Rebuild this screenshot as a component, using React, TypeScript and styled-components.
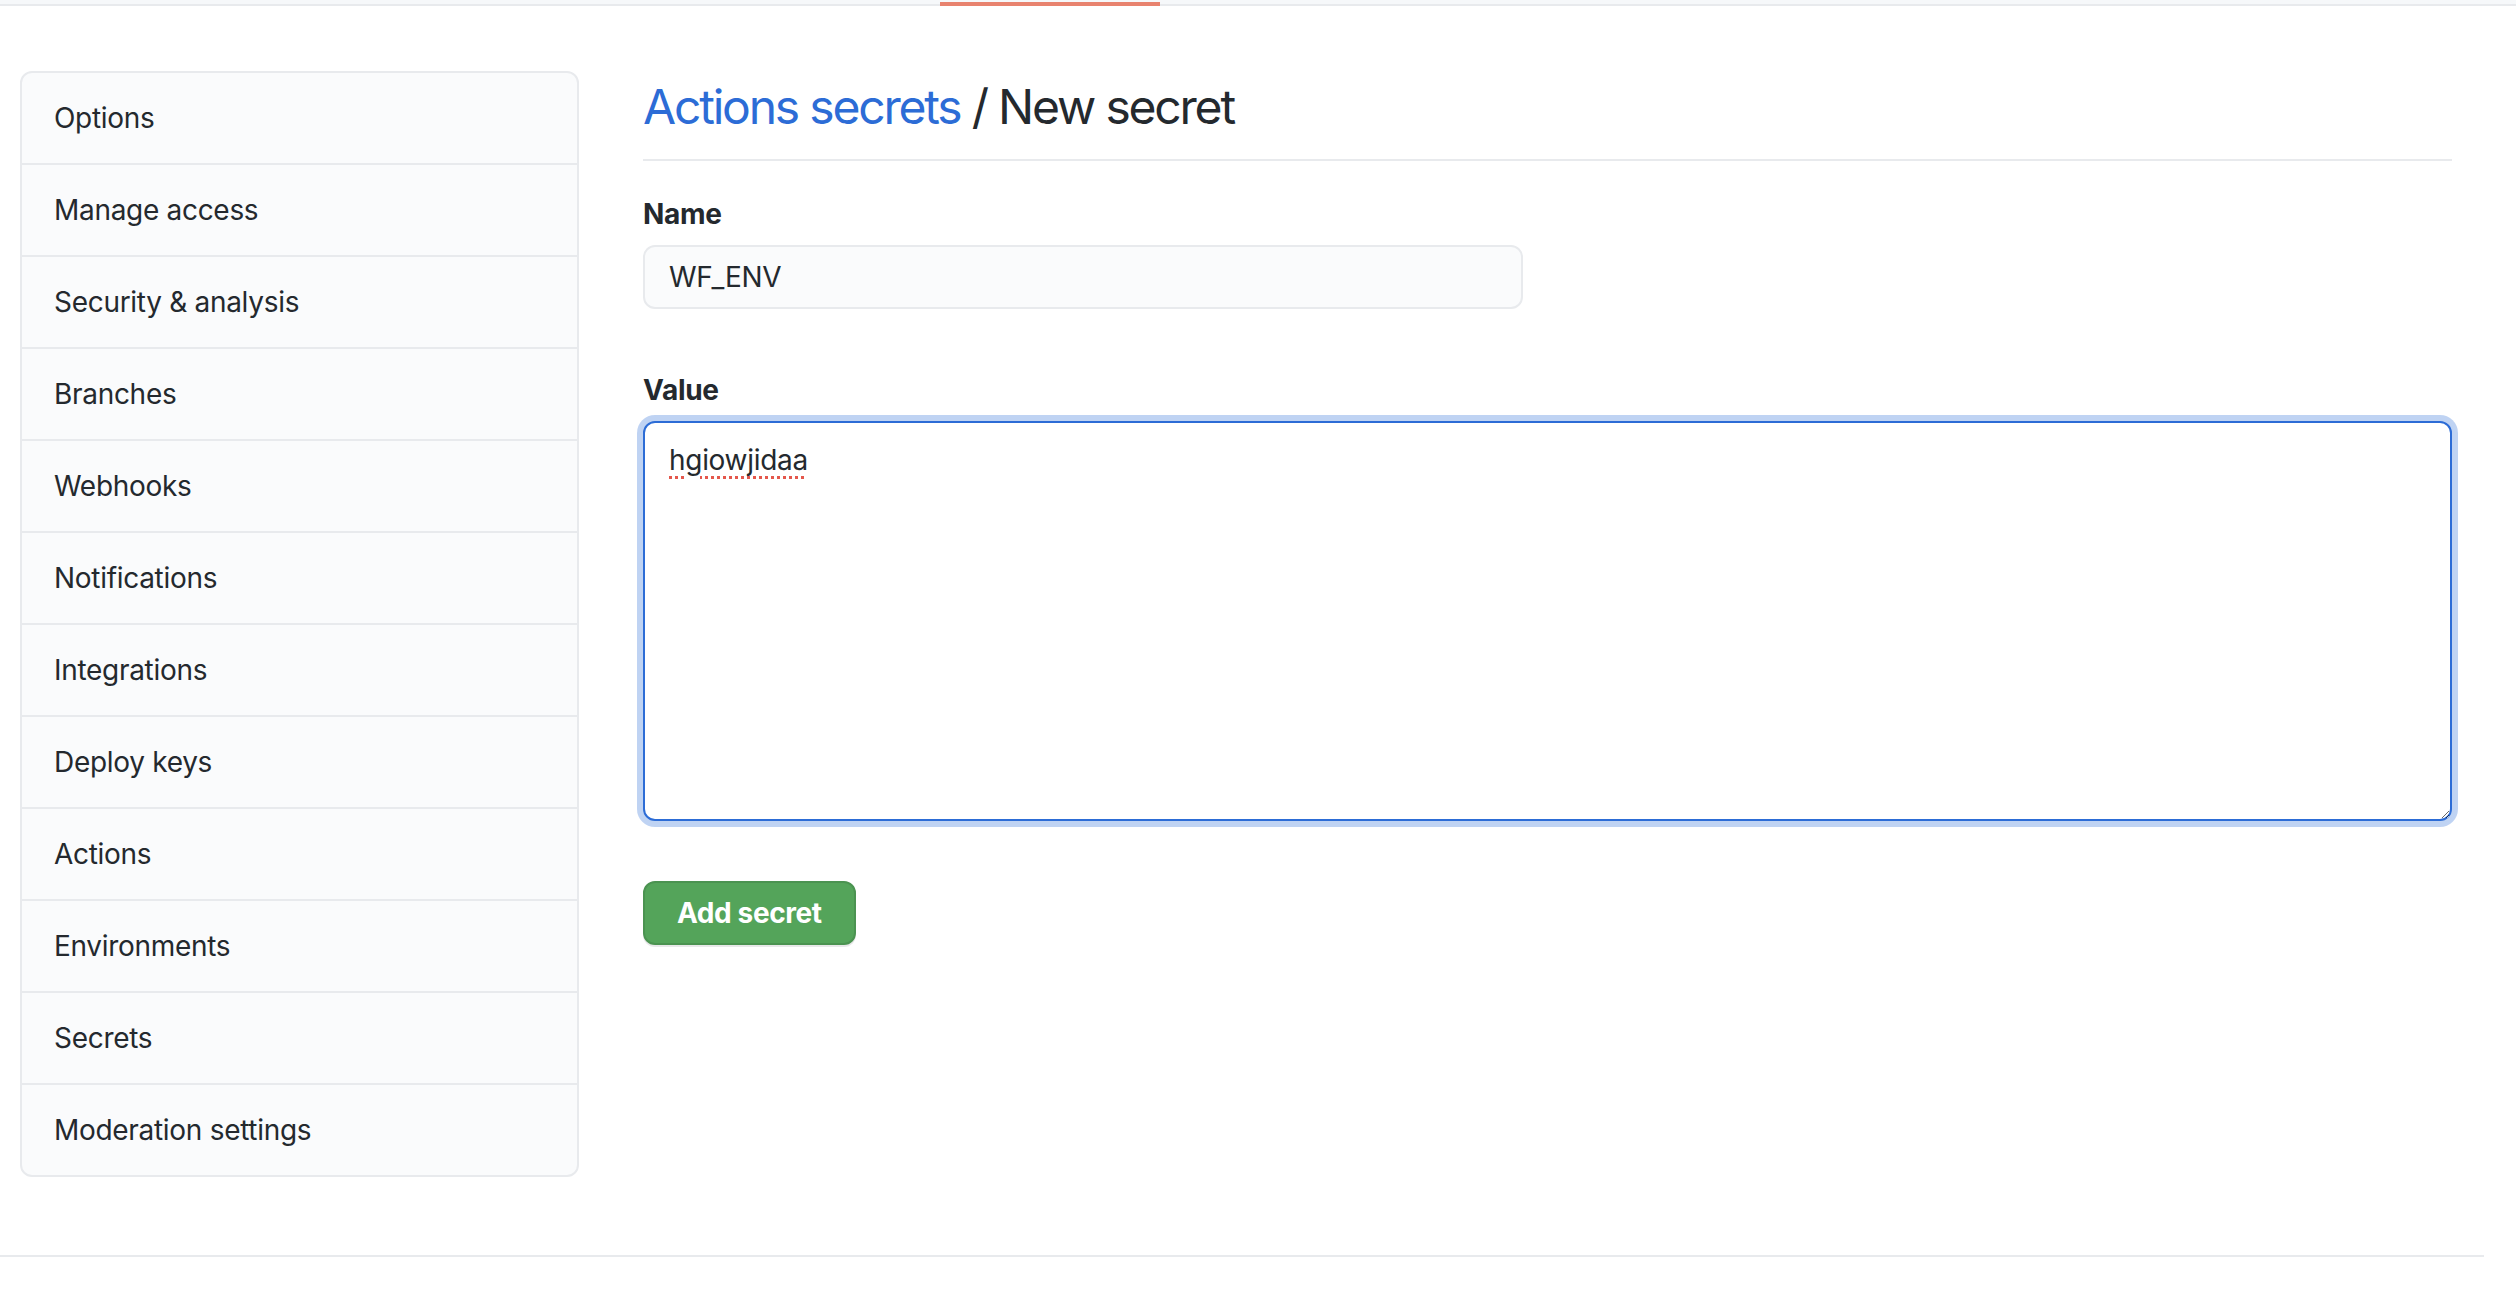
import { useEffect, useRef } from "react";
import styled, { createGlobalStyle } from "styled-components";

const menuItems = [
  "Options",
  "Manage access",
  "Security & analysis",
  "Branches",
  "Webhooks",
  "Notifications",
  "Integrations",
  "Deploy keys",
  "Actions",
  "Environments",
  "Secrets",
  "Moderation settings",
];

export default function App() {
  const valueRef = useRef<HTMLTextAreaElement>(null);

  useEffect(() => {
    const el = valueRef.current;
    if (!el) return;
    el.focus();
    el.setSelectionRange(el.value.length, el.value.length);
  }, []);

  return (
    <>
      <GlobalStyle />
      <RepoNav>
        <SelectedTab />
      </RepoNav>
      <Layout>
        <Sidebar>
          {menuItems.map((item) => (
            <MenuItem key={item} href="#">
              {item}
            </MenuItem>
          ))}
        </Sidebar>
        <Main>
          <Subhead>
            <Crumb href="#">Actions secrets</Crumb> / New secret
          </Subhead>
          <FormGroup>
            <Label htmlFor="secret_name">Name</Label>
            <NameInput id="secret_name" defaultValue="WF_ENV" spellCheck={false} />
          </FormGroup>
          <FormGroup>
            <Label htmlFor="secret_value">Value</Label>
            <ValueArea id="secret_value" ref={valueRef} defaultValue="hgiowjidaa" />
          </FormGroup>
          <PrimaryButton type="button">Add secret</PrimaryButton>
        </Main>
      </Layout>
      <Footer />
    </>
  );
}

const GlobalStyle = createGlobalStyle`
  html, body {
    margin: 0;
    padding: 0;
    background: #ffffff;
  }

  body {
    color: #24292e;
    font-family: Inter, "Liberation Sans", Arial, sans-serif;
    font-size: 28px;
  }

  * {
    box-sizing: border-box;
  }
`;

const RepoNav = styled.div`
  display: flex;
  height: 6px;
  padding-left: 940px;
  background: #f6f8fa;
  border-bottom: 2px solid #e8eaed;
`;

const SelectedTab = styled.span`
  width: 220px;
  height: 4px;
  margin-top: 2px;
  background: #e8836f;
`;

const Layout = styled.div`
  display: flex;
  align-items: flex-start;
  gap: 64px;
  padding: 65px 64px 78px 20px;
`;

const Sidebar = styled.nav`
  display: flex;
  flex-direction: column;
  flex-shrink: 0;
  width: 559px;
  background: #fafbfc;
  border: 2px solid #e8eaed;
  border-radius: 12px;
  overflow: hidden;
`;

const MenuItem = styled.a`
  display: block;
  padding: 24px 32px;
  line-height: 42px;
  font-size: 28px;
  letter-spacing: -0.3px;
  color: #24292e;
  text-decoration: none;
  border-top: 2px solid #e8eaed;

  &:first-child {
    border-top: none;
  }
`;

const Main = styled.main`
  flex: 1;
  min-width: 0;
`;

const Subhead = styled.h2`
  margin: 0 0 32px;
  padding-bottom: 16px;
  font-size: 48px;
  font-weight: 400;
  line-height: 72px;
  letter-spacing: -2.2px;
  color: #24292e;
  border-bottom: 2px solid #e8eaed;
`;

const Crumb = styled.a`
  color: #2c6cd6;
  text-decoration: none;
`;

const FormGroup = styled.div`
  display: flex;
  flex-direction: column;
  gap: 10px;
  margin-bottom: 60px;
`;

const Label = styled.label`
  font-size: 28px;
  font-weight: 700;
  line-height: 42px;
  letter-spacing: -0.3px;
`;

const NameInput = styled.input`
  width: 880px;
  height: 64px;
  padding: 0 24px;
  font-family: inherit;
  font-size: 28px;
  letter-spacing: -0.3px;
  color: #24292e;
  background: #fafbfc;
  border: 2px solid #e8eaed;
  border-radius: 12px;
  outline: none;
`;

const ValueArea = styled.textarea`
  width: 100%;
  height: 400px;
  padding: 16px 24px;
  font-family: inherit;
  font-size: 28px;
  line-height: 42px;
  letter-spacing: -0.3px;
  color: #24292e;
  background: #ffffff;
  border: 2px solid #2c6cd6;
  border-radius: 12px;
  box-shadow: 0 0 0 6px rgba(44, 108, 214, 0.3);
  outline: none;
  resize: vertical;
  caret-color: #24292e;
  text-decoration: underline dotted #e4574c;
  text-decoration-thickness: 3px;
  text-underline-offset: 6px;
`;

const PrimaryButton = styled.button`
  height: 64px;
  padding: 0 32px;
  font-family: inherit;
  font-size: 28px;
  font-weight: 700;
  line-height: 40px;
  letter-spacing: -0.4px;
  color: #ffffff;
  background: #54a45a;
  border: 2px solid #4b9351;
  border-radius: 12px;
  box-shadow: 0 2px 0 rgba(27, 31, 35, 0.1);
  cursor: pointer;
`;

const Footer = styled.footer`
  width: 2484px;
  border-top: 2px solid #e8eaed;
  height: 42px;
`;
